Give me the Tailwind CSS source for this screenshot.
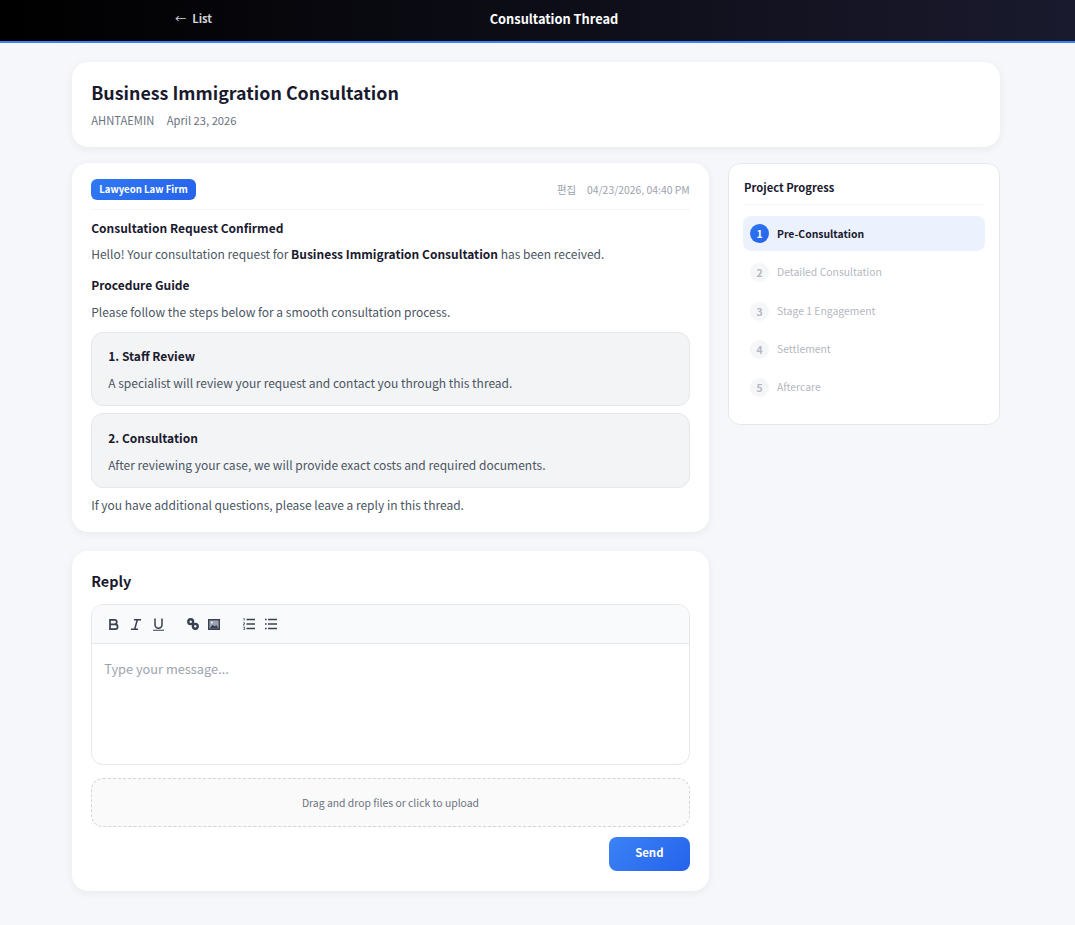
<!DOCTYPE html>
<html lang="en">
<head>
<meta charset="utf-8">
<title>Consultation Thread</title>
<script src="https://cdn.jsdelivr.net/npm/@tailwindcss/browser@4"></script>
</head>
<body class="bg-[#f5f7fb] font-['Noto_Sans_CJK_KR','Noto_Sans',sans-serif] text-[#4b5563] min-h-[925px]">
<header class="h-[43px] border-b-2 border-[#3b82f6] bg-linear-to-r/srgb from-[#000000] to-[#1a1a2e]">
  <div class="relative h-[41px] w-[1075px]">
    <a class="absolute left-[175px] top-[9px] flex gap-[6px] text-[11.2px] leading-[18px] font-bold text-[#d1d5db]"><span class="font-normal">←</span><span>List</span></a>
    <h1 class="w-[1108px] text-center pt-[8px] text-[12.8px] leading-[22px] font-bold text-white">Consultation Thread</h1>
  </div>
</header>
<main class="w-[928px] ml-[72px] pt-[19px]">
  <section class="h-[85px] rounded-2xl bg-white shadow-[0_2px_8px_rgba(0,0,0,0.06)] px-[19.2px] pt-[16px]">
    <h2 class="text-[17.85px] leading-[28px] font-bold text-[#1a1a2e]">Business Immigration Consultation</h2>
    <div class="mt-[5px] flex gap-[12.5px] text-[11.2px] leading-[18px] text-[#6b7280]"><span>AHNTAEMIN</span><span>April 23, 2026</span></div>
  </section>
  <div class="mt-4 flex gap-[19px] items-start">
    <div class="w-[637px] shrink-0">
      <article class="h-[369px] rounded-2xl bg-white shadow-[0_2px_8px_rgba(0,0,0,0.06)] px-[19.2px] pt-4">
        <div class="h-[31px] flex items-start justify-between border-b border-[#f3f4f6]">
          <span class="h-[21px] rounded-md bg-linear-135/srgb from-[#3178f3] to-[#2563eb] px-2 text-[9.6px] leading-[20px] font-bold text-white">Lawyeon Law Firm</span>
          <div class="flex gap-[11px] text-[10.4px] leading-[21px] text-[#9ca3af]"><span>편집</span><span>04/23/2026, 04:40 PM</span></div>
        </div>
        <h3 class="mt-[8px] text-[12px] leading-[20px] font-bold text-[#1a1a2e]">Consultation Request Confirmed</h3>
        <p class="mt-[6px] text-[12px] leading-[20px]">Hello! Your consultation request for <strong class="font-bold text-[#1a1a2e]">Business Immigration Consultation</strong> has been received.</p>
        <h3 class="mt-[11px] text-[12px] leading-[20px] font-bold text-[#1a1a2e]">Procedure Guide</h3>
        <p class="mt-[7px] text-[12px] leading-[20px]">Please follow the steps below for a smooth consultation process.</p>
        <div class="mt-[10px] h-[74px] rounded-xl border border-[#e5e7eb] bg-[#f3f4f6] px-4 pt-[13px]">
          <h4 class="text-[12px] leading-[20px] font-bold text-[#1a1a2e]">1. Staff Review</h4>
          <p class="mt-[7px] text-[12px] leading-[20px]">A specialist will review your request and contact you through this thread.</p>
        </div>
        <div class="mt-[7px] h-[75px] rounded-xl border border-[#e5e7eb] bg-[#f3f4f6] px-4 pt-[14px]">
          <h4 class="text-[12px] leading-[20px] font-bold text-[#1a1a2e]">2. Consultation</h4>
          <p class="mt-[7px] text-[12px] leading-[20px]">After reviewing your case, we will provide exact costs and required documents.</p>
        </div>
        <p class="mt-[7px] text-[12px] leading-[20px]">If you have additional questions, please leave a reply in this thread.</p>
      </article>
      <section class="mt-[19px] h-[340px] rounded-2xl bg-white shadow-[0_2px_8px_rgba(0,0,0,0.06)] px-[19.2px] pt-[19px]">
        <h2 class="text-[14.4px] leading-[22px] font-bold text-[#1a1a2e]">Reply</h2>
        <div class="mt-[12px] h-[161px] rounded-xl border border-[#e5e7eb] overflow-hidden">
          <div class="h-[39px] bg-[#f9fafb] border-b border-[#e5e7eb] text-[#374151]">
            <div class="flex items-center h-full pl-[17px]">
              <svg class="w-[10px] h-[11px]" viewBox="0 0 10 11" fill="none" stroke="currentColor" stroke-width="1.7"><path d="M1 .9h4.6a2.2 2.2 0 0 1 0 4.4H1zM1 5.3h5.2a2.4 2.4 0 0 1 0 4.8H1z"/></svg>
              <svg class="w-[10px] h-[11px] ml-[12px]" viewBox="0 0 10 11" fill="none" stroke="currentColor" stroke-width="1.5"><path d="M3 .8h7M0 10.2h7M6.3.8 3.7 10.2"/></svg>
              <svg class="w-[11px] h-[13px] ml-[12px]" viewBox="0 0 11 13" fill="none" stroke="currentColor" stroke-width="1.5"><path d="M2 .5v6.2a3.5 3.5 0 0 0 7 0V.5"/><path d="M0 12.3h11" stroke-width="1.1"/></svg>
              <svg class="w-[12px] h-[12px] ml-[23px]" viewBox="0 0 12 12" fill="none" stroke="currentColor" stroke-width="2.4"><circle cx="3.7" cy="3.7" r="2.4"/><circle cx="8.3" cy="8.3" r="2.4"/></svg>
              <svg class="w-[12px] h-[11px] ml-[9px]" viewBox="0 0 12 11"><rect x="0.7" y="0.7" width="10.6" height="9.6" fill="#9ca3af" stroke="currentColor" stroke-width="1.4"/><path d="M1.5 9.5l3.2-3.7 1.8 1.8 1.8-1.6 2.2 3.5z" fill="currentColor"/><circle cx="3.8" cy="3.6" r="1" fill="#f9fafb"/></svg>
              <svg class="w-[12px] h-[12px] ml-[23px]" viewBox="0 0 12 12" fill="none" stroke="currentColor" stroke-width="1.3"><path d="M3.5 1.5H12M3.5 6H12M3.5 10.5H12"/><path d="M.4.4h.8v2.2M.2 4.8h1.3v1L.2 7h1.5M.2 9.2h1.4v2.4H.2" stroke-width=".8"/></svg>
              <svg class="w-[12px] h-[12px] ml-[10px]" viewBox="0 0 12 12" fill="none" stroke="currentColor" stroke-width="1.3"><path d="M3 1.5h9M3 6h9M3 10.5h9M0 1.5h1.6M0 6h1.6M0 10.5h1.6"/></svg>
            </div>
          </div>
          <div class="px-3 pt-[14px] text-[12.8px] leading-[22px] text-[#9ca3af]">Type your message...</div>
        </div>
        <div class="mt-[13px] h-[49px] rounded-xl border border-dashed border-[#d1d5db] bg-[#fafafa] text-center text-[10.4px] leading-[47px] text-[#6b7280]">Drag and drop files or click to upload</div>
        <div class="mt-[10px] flex justify-end">
          <button class="h-[34px] w-[81px] rounded-lg bg-linear-135/srgb from-[#3b82f6] to-[#2563eb] pb-[2px] text-[11.4px] font-bold text-white">Send</button>
        </div>
      </section>
    </div>
    <aside class="w-[272px] h-[262px] rounded-xl border border-[#e5e7eb] bg-white pl-[15px] pr-[14px] pt-[13px]">
      <h3 class="h-[28px] -ml-[1px] pl-[1px] border-b border-[#f3f4f6] text-[11.2px] leading-[20px] font-bold text-[#1a1a2e]">Project Progress</h3>
      <ol class="mt-[11px] -ml-[1px]">
        <li class="h-[35px] flex items-center gap-[8px] rounded-lg bg-[#ebf2fe] px-[7px] text-[10.4px] font-bold text-[#1a1a2e]"><span class="w-[19px] h-[19px] rounded-full bg-linear-135/srgb from-[#2f76f2] to-[#2563eb] text-white text-center leading-[19px]">1</span>Pre-Consultation</li>
        <li class="mt-[2px] h-[38px] flex items-center gap-[8px] px-[7px] text-[10.4px] text-[#b4b8c1]"><span class="w-[19px] h-[19px] rounded-full bg-[#f5f6f8] text-center leading-[19px] font-bold">2</span>Detailed Consultation</li>
        <li class="mt-[1px] h-[38px] flex items-center gap-[8px] px-[7px] text-[10.4px] text-[#b4b8c1]"><span class="w-[19px] h-[19px] rounded-full bg-[#f5f6f8] text-center leading-[19px] font-bold">3</span>Stage 1 Engagement</li>
        <li class="h-[38px] flex items-center gap-[8px] px-[7px] text-[10.4px] text-[#b4b8c1]"><span class="w-[19px] h-[19px] rounded-full bg-[#f5f6f8] text-center leading-[19px] font-bold">4</span>Settlement</li>
        <li class="h-[38px] flex items-center gap-[8px] px-[7px] text-[10.4px] text-[#b4b8c1]"><span class="w-[19px] h-[19px] rounded-full bg-[#f5f6f8] text-center leading-[19px] font-bold">5</span>Aftercare</li>
      </ol>
    </aside>
  </div>
</main>
</body>
</html>
